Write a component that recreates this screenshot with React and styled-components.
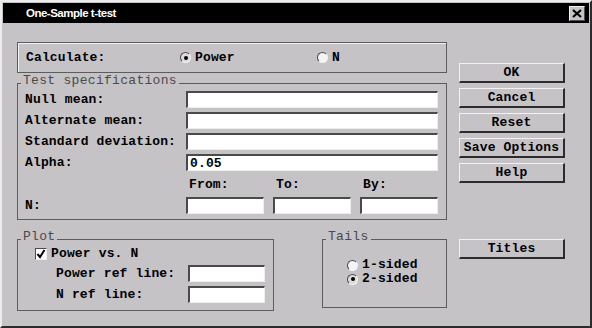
import React from 'react';
import styled, { createGlobalStyle } from 'styled-components';

const GlobalStyle = createGlobalStyle`
  html, body {
    margin: 0;
    padding: 0;
    background: #c6c3c6;
  }
  * {
    box-sizing: border-box;
  }
`;

const Window = styled.div`
  width: 592px;
  height: 328px;
  padding: 1px;
  background: #c6c3c6;
  border-top: 2px solid #ececec;
  border-left: 2px solid #ececec;
  border-right: 2px solid #2c2c2c;
  border-bottom: 2px solid #2c2c2c;
  font-family: "Liberation Mono", monospace;
  font-size: 13px;
  font-weight: bold;
  letter-spacing: 0.15px;
  color: #000;
  overflow: hidden;
`;

const TitleBar = styled.div`
  height: 20px;
  display: flex;
  align-items: center;
  justify-content: space-between;
  padding: 0 4px 0 23px;
  background: #000;
`;

const Title = styled.span`
  font-family: "Liberation Sans", sans-serif;
  font-size: 11.5px;
  font-weight: bold;
  letter-spacing: -0.5px;
  color: #fff;
`;

const CloseButton = styled.div`
  width: 16px;
  height: 15px;
  display: flex;
  align-items: center;
  justify-content: center;
  background: #c6c3c6;
  border-top: 1px solid #f2f2f2;
  border-left: 1px solid #f2f2f2;
  border-right: 1px solid #505050;
  border-bottom: 1px solid #505050;
`;

const Body = styled.div`
  display: grid;
  grid-template-columns: 430px 106px;
  column-gap: 12px;
  row-gap: 10px;
  padding: 19px 0 0 14px;
`;

const LeftTop = styled.div`
  display: flex;
  flex-direction: column;
  gap: 1px;
`;

const CalcBox = styled.div`
  height: 31px;
  display: grid;
  grid-template-columns: 154px 137px auto;
  align-items: center;
  padding-left: 8px;
  border: 1px solid #5c5c5c;
  box-shadow: inset 1px 1px 0 #f2f2f2;
`;

const Group = styled.fieldset`
  margin: 0;
  min-width: 0;
  width: ${p => p.$width || 'auto'};
  padding: 0;
  border: 1px solid #5c5c5c;
`;

const Legend = styled.legend`
  margin-left: 3px;
  padding: 0 2px 5px;
  line-height: 13px;
  font-weight: normal;
  letter-spacing: 0.3px;
  color: #4a4a4a;
`;

const GroupBody = styled.div`
  padding: ${p => p.$pad};
`;

const Label = styled.span`
  line-height: 13px;
  white-space: nowrap;
`;

const SpecGrid = styled.div`
  display: grid;
  grid-template-columns: 161px 252px;
  grid-auto-rows: 17px;
  row-gap: 4px;
  align-items: center;
  margin-top: -1px;
`;

const NGrid = styled.div`
  display: grid;
  grid-template-columns: 152px 78px 78px 78px;
  grid-template-rows: 13px 17px;
  column-gap: 9px;
  row-gap: 6px;
  align-items: center;
  margin-top: 7px;
`;

const ColHead = styled.span`
  line-height: 13px;
  padding-left: 3px;
`;

const Field = styled.input`
  width: 100%;
  height: 17px;
  margin: 0;
  padding: 0 0 0 2px;
  background: #fff;
  border-top: 2px solid #4a4a4a;
  border-left: 2px solid #4a4a4a;
  border-right: 1px solid #eeeeee;
  border-bottom: 1px solid #eeeeee;
  font: inherit;
  letter-spacing: inherit;
  color: #000;
  outline: none;
`;

const ButtonStack = styled.div`
  display: flex;
  flex-direction: column;
  gap: 5px;
  padding-top: 21px;
`;

const Button = styled.button`
  width: 106px;
  height: 20px;
  margin: ${p => p.$top || 0}px 0 0;
  padding: 0;
  background: #c6c3c6;
  border-top: 1px solid #f2f2f2;
  border-left: 1px solid #f2f2f2;
  border-right: 2px solid #2c2c2c;
  border-bottom: 2px solid #2c2c2c;
  font: inherit;
  letter-spacing: inherit;
  color: #000;
  line-height: 16px;
  text-align: center;
`;

const BottomRow = styled.div`
  display: flex;
  justify-content: space-between;
  align-items: flex-start;
`;

const Option = styled.label`
  display: flex;
  align-items: center;
  gap: 4px;
  line-height: 14px;
  white-space: nowrap;
  margin-top: ${p => p.$top || 0}px;
`;

const RadioDot = styled.span`
  position: relative;
  width: 11px;
  height: 11px;
  flex: none;
  border-radius: 50%;
  background: ${p => (p.$checked ? '#dcdcdc' : '#f4f4f4')};
  border: 1px solid;
  border-color: #4a4a4a #f4f4f4 #f4f4f4 #4a4a4a;
  &::after {
    content: '';
    display: ${p => (p.$checked ? 'block' : 'none')};
    position: absolute;
    left: 2.5px;
    top: 2.5px;
    width: 4px;
    height: 4px;
    border-radius: 50%;
    background: #000;
  }
`;

const CheckBox = styled.span`
  width: 12px;
  height: 12px;
  flex: none;
  display: flex;
  align-items: center;
  justify-content: center;
  background: #fff;
  border: 1px solid;
  border-color: #4a4a4a #eeeeee #eeeeee #4a4a4a;
`;

const PlotGrid = styled.div`
  display: grid;
  grid-template-columns: 132px 77px;
  grid-auto-rows: 17px;
  row-gap: 4px;
  align-items: center;
  padding-left: 21px;
  margin-top: 4px;
`;

const TailsList = styled.div`
  display: flex;
  flex-direction: column;
`;

const Radio = ({ checked, children }) => (
  <Option>
    <RadioDot $checked={checked} />
    {children}
  </Option>
);

const specs = [
  ['Null mean:', ''],
  ['Alternate mean:', ''],
  ['Standard deviation:', ''],
  ['Alpha:', '0.05'],
];

export default function App() {
  return (
    <>
      <GlobalStyle />
      <Window>
        <TitleBar>
          <Title>One-Sample t-test</Title>
          <CloseButton>
            <svg width="10" height="9" viewBox="0 0 10 9">
              <path d="M1 1 L9 8 M9 1 L1 8" stroke="#000" strokeWidth="2.2" />
            </svg>
          </CloseButton>
        </TitleBar>
        <Body>
          <LeftTop>
            <CalcBox>
              <Label>Calculate:</Label>
              <Radio checked>Power</Radio>
              <Radio>N</Radio>
            </CalcBox>
            <Group>
              <Legend>Test specifications</Legend>
              <GroupBody $pad="0 0 5px 7px">
                <SpecGrid>
                  {specs.map(([label, value]) => (
                    <React.Fragment key={label}>
                      <Label>{label}</Label>
                      <Field readOnly value={value} />
                    </React.Fragment>
                  ))}
                </SpecGrid>
                <NGrid>
                  <span />
                  <ColHead>From:</ColHead>
                  <ColHead>To:</ColHead>
                  <ColHead>By:</ColHead>
                  <Label>N:</Label>
                  <Field readOnly value="" />
                  <Field readOnly value="" />
                  <Field readOnly value="" />
                </NGrid>
              </GroupBody>
            </Group>
          </LeftTop>
          <ButtonStack>
            <Button>OK</Button>
            <Button>Cancel</Button>
            <Button>Reset</Button>
            <Button>Save Options</Button>
            <Button>Help</Button>
          </ButtonStack>
          <BottomRow>
            <Group $width="257px">
              <Legend>Plot</Legend>
              <GroupBody $pad="0 0 7px 17px">
                <Option $top={-1}>
                  <CheckBox>
                    <svg width="10" height="10" viewBox="0 0 10 10">
                      <path d="M1.5 5 L4 8 L8.5 1" stroke="#000" strokeWidth="2" fill="none" />
                    </svg>
                  </CheckBox>
                  Power vs. N
                </Option>
                <PlotGrid>
                  <Label>Power ref line:</Label>
                  <Field readOnly value="" />
                  <Label>N ref line:</Label>
                  <Field readOnly value="" />
                </PlotGrid>
              </GroupBody>
            </Group>
            <Group $width="125px">
              <Legend>Tails</Legend>
              <GroupBody $pad="10px 0 21px 24px">
                <TailsList>
                  <Radio>1-sided</Radio>
                  <Radio checked>2-sided</Radio>
                </TailsList>
              </GroupBody>
            </Group>
          </BottomRow>
          <div>
            <Button $top={9}>Titles</Button>
          </div>
        </Body>
      </Window>
    </>
  );
}
